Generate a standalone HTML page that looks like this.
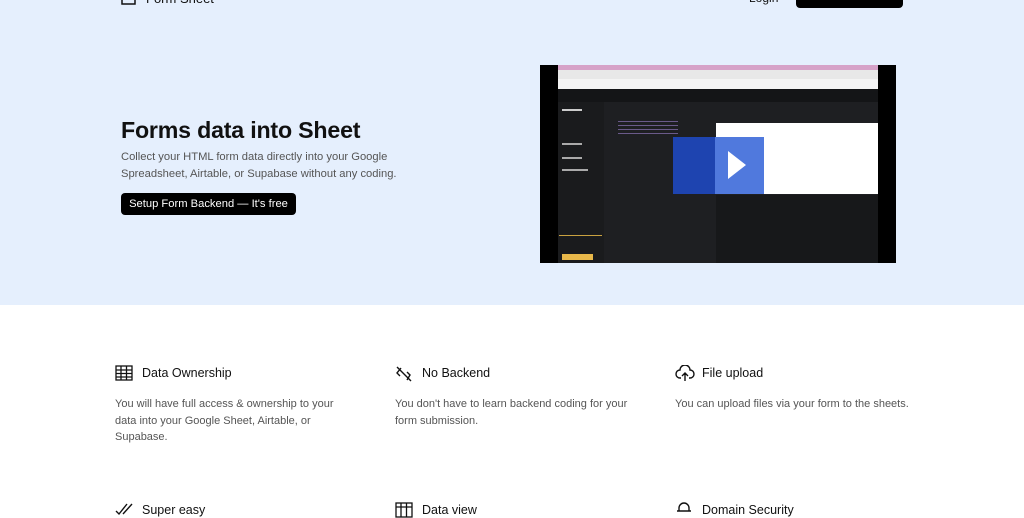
<!DOCTYPE html>
<html><head><meta charset="utf-8"><style>
*{margin:0;padding:0;box-sizing:border-box}
body{width:1024px;height:512px;overflow:hidden;font-family:"Liberation Sans",sans-serif;background:#fff;color:#111;position:relative}
.hero{position:absolute;left:0;top:0;width:1024px;height:305px;background:#e5effd}
.abs{position:absolute;white-space:nowrap}
h1{position:absolute;left:121px;top:117px;font-size:23.2px;font-weight:bold;letter-spacing:-0.2px}
.sub{position:absolute;left:121px;top:149px;font-size:11.2px;line-height:16.5px;color:#555;width:300px}
.btn{position:absolute;left:121px;top:193px;width:175px;height:22px;background:#000;color:#fff;border-radius:4px;font-size:11.2px;line-height:22px;text-align:center}
.f{position:absolute;width:260px}
.f .t{position:absolute;left:27px;top:0;font-size:12.5px;color:#111;white-space:nowrap}
.f .d{position:absolute;left:0;top:30px;font-size:11px;line-height:16.5px;color:#555;width:230px}
.f svg{position:absolute;left:0;top:-1px}
</style></head><body>
<div class="hero"></div>
<svg class="abs" style="left:121px;top:-8px" width="16" height="14" viewBox="0 0 16 14"><rect x="1" y="1" width="13" height="11" fill="none" stroke="#111" stroke-width="1.5"/></svg>
<div class="abs" style="left:146px;top:-9px;font-size:13px">Form Sheet</div>
<div class="abs" style="left:749px;top:-9px;font-size:12px">Login</div>
<div class="abs" style="left:796px;top:-14px;width:107px;height:22px;background:#000;border-radius:4px;color:#fff;font-size:11px;line-height:23px;text-align:center">View all forms</div>

<h1>Forms data into Sheet</h1>
<div class="sub">Collect your HTML form data directly into your Google Spreadsheet, Airtable, or Supabase without any coding.</div>
<div class="btn">Setup Form Backend — It's free</div>

<div class="abs" style="left:540px;top:65px;width:356px;height:198px;background:#000">
 <div class="abs" style="left:18px;top:0;width:320px;height:198px;background:#1e1f22">
  <div class="abs" style="left:0;top:0;width:320px;height:5px;background:#d6a2c8"></div>
  <div class="abs" style="left:0;top:5px;width:320px;height:9px;background:#e8e8e8"></div>
  <div class="abs" style="left:0;top:14px;width:320px;height:10px;background:#f4f4f4"></div>
  <div class="abs" style="left:0;top:24px;width:320px;height:13px;background:#141517"></div>
  <div class="abs" style="left:0;top:37px;width:46px;height:161px;background:#1a1b1d"></div>
  <div class="abs" style="left:60px;top:54px;width:60px;height:18px;background:repeating-linear-gradient(#1e1f22 0 2px,#6a5a8a 2px 3px,#1e1f22 3px 4px)"></div>
  <div class="abs" style="left:4px;top:44px;width:20px;height:2px;background:#ccc"></div>
  <div class="abs" style="left:4px;top:78px;width:20px;height:2px;background:#aaa"></div>
  <div class="abs" style="left:4px;top:92px;width:20px;height:2px;background:#aaa"></div>
  <div class="abs" style="left:4px;top:104px;width:26px;height:2px;background:#aaa"></div>
  <div class="abs" style="left:1px;top:170px;width:43px;height:1px;background:#c9a240"></div>
  <div class="abs" style="left:4px;top:189px;width:31px;height:6px;background:#e8b84a"></div>
  <div class="abs" style="left:158px;top:58px;width:162px;height:71px;background:#fff"></div>
  <div class="abs" style="left:158px;top:130px;width:162px;height:68px;background:#17181a"></div>
  <div class="abs" style="left:115px;top:72px;width:42px;height:57px;background:#1e44b0"></div>
  <div class="abs" style="left:157px;top:72px;width:49px;height:57px;background:#5079dd"></div>
  <svg class="abs" style="left:170px;top:86px" width="20" height="28"><polygon points="0,0 18,14 0,28" fill="#fff"/></svg>
 </div>
</div>

<div class="f" style="left:115px;top:366px">
 <svg width="18" height="16" viewBox="0 0 18 16" fill="none" stroke="#111" stroke-width="1.3"><rect x="1" y="1" width="16" height="14"/><path d="M1 5H17M1 8.5H17M1 12H17M6 1V15M11.5 1V15"/></svg>
 <div class="t">Data Ownership</div>
 <div class="d">You will have full access &amp; ownership to your data into your Google Sheet, Airtable, or Supabase.</div>
</div>
<div class="f" style="left:395px;top:366px">
 <svg width="18" height="18" viewBox="0 0 18 18" fill="none" stroke="#111" stroke-width="1.4"><path d="M2 2L16 16M6 3L2 8L5 11M12 7L15 10L12 15"/></svg>
 <div class="t">No Backend</div>
 <div class="d" style="width:240px">You don't have to learn backend coding for your form submission.</div>
</div>
<div class="f" style="left:675px;top:366px">
 <svg width="20" height="18" viewBox="0 0 20 18" fill="none" stroke="#111" stroke-width="1.4"><path d="M6 13H5A4 4 0 0 1 5 5A5 5 0 0 1 15 5A4 4 0 0 1 15 13H14M10 16V8M7 11L10 8L13 11"/></svg>
 <div class="t">File upload</div>
 <div class="d" style="width:280px;white-space:nowrap">You can upload files via your form to the sheets.</div>
</div>
<div class="f" style="left:115px;top:503px">
 <svg width="20" height="14" viewBox="0 0 20 14" fill="none" stroke="#111" stroke-width="1.4"><path d="M1 9L4 12L12 2M8 12L17 2"/></svg>
 <div class="t">Super easy</div>
</div>
<div class="f" style="left:395px;top:503px">
 <svg width="18" height="16" viewBox="0 0 18 16" fill="none" stroke="#111" stroke-width="1.3"><rect x="1" y="1" width="16" height="14"/><path d="M1 5H17M6 1V15M11.5 1V15"/></svg>
 <div class="t">Data view</div>
</div>
<div class="f" style="left:675px;top:503px">
 <svg width="18" height="16" viewBox="0 0 18 16" fill="none" stroke="#111" stroke-width="1.4"><path d="M4 9V6A5 5 0 0 1 14 6V9M2 9H16"/></svg>
 <div class="t">Domain Security</div>
</div>
</body></html>
